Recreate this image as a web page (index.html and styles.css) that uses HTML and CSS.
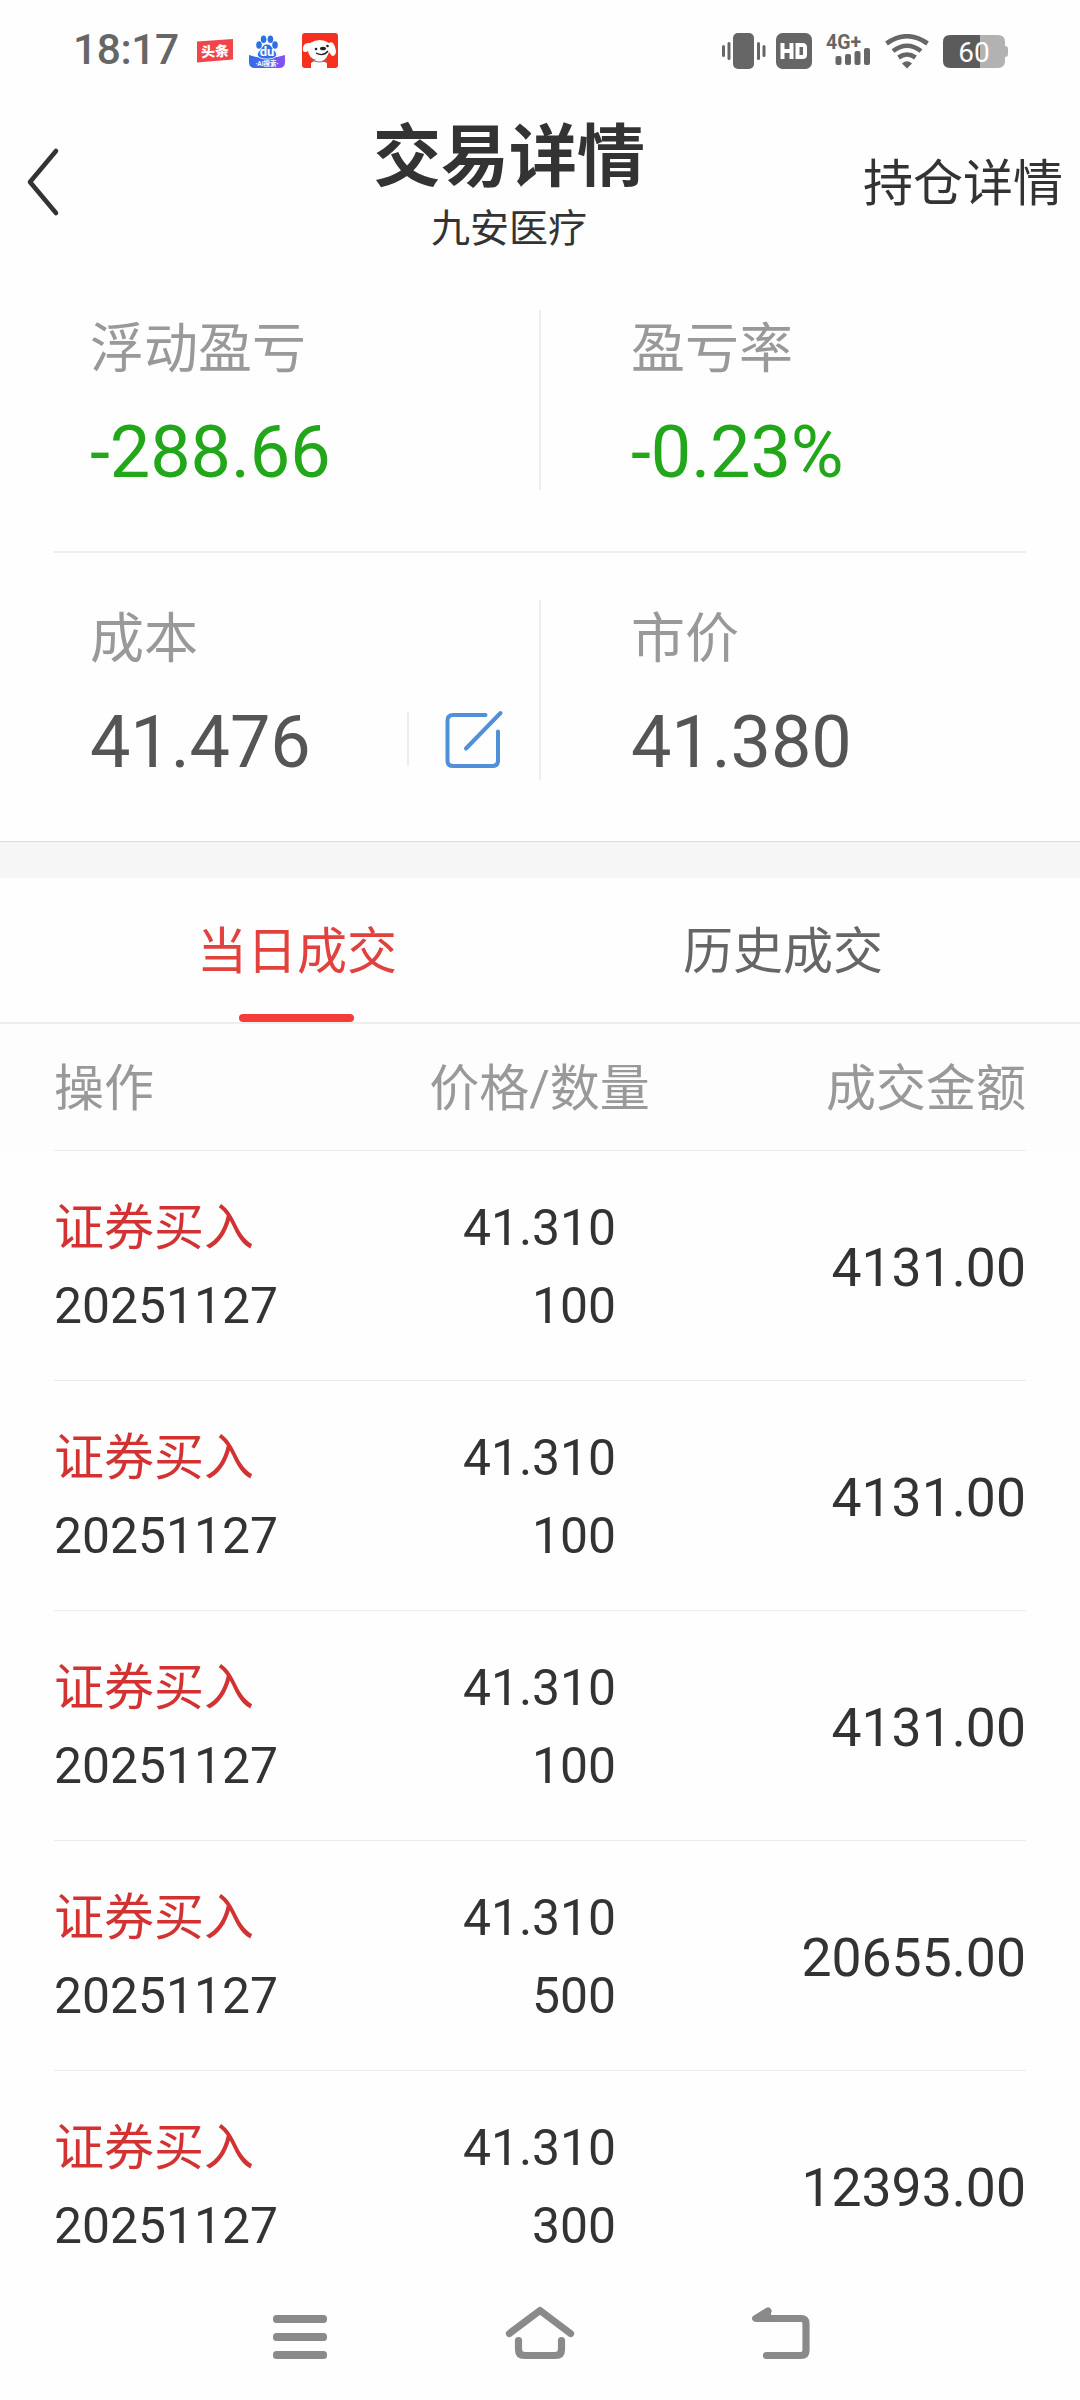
FILE: index.html
```html
<!DOCTYPE html>
<html lang="zh-CN">
<head>
<meta charset="utf-8">
<title>交易详情</title>
<link rel="stylesheet" href="styles.css">
</head>
<body>
<div class="screen">
  <div class="status">
    <span class="clock">18:17</span>
    <svg class="app-toutiao" width="36" height="24" viewBox="0 0 36 24"><path d="M0 2.500 36 0V20.500L0 23.500Z" fill="#f0464b"/><text x="4" y="17.500" class="toutiao-text" transform="rotate(-3 18 12)">头条</text></svg>
    <svg class="app-baidu" width="36" height="34" viewBox="0 0 36 34"><defs><linearGradient id="bd" x1="0" x2="1"><stop offset="0" stop-color="#2f6de8"/><stop offset="1" stop-color="#8552f5"/></linearGradient></defs><path d="M0 20Q18 26 36 20V27Q36 33 30 33H6Q0 33 0 27Z" fill="url(#bd)"/><g fill="#2c6fe6"><ellipse cx="10" cy="10" rx="2.800" ry="3.800"/><ellipse cx="14.600" cy="4.200" rx="2.800" ry="3.800"/><ellipse cx="21.400" cy="4.200" rx="2.800" ry="3.800"/><ellipse cx="26" cy="10" rx="2.800" ry="3.800"/><path d="M18 9C22 9 23 13 26 16C30 21 26 24 18 24C10 24 6 21 10 16C13 13 14 9 18 9Z" stroke="#fff" stroke-width=".8"/></g><text x="18" y="21" class="du-text">du</text><text x="18" y="30.500" class="du-label">·AI搜索·</text></svg>
    <svg class="app-jd" width="36" height="36" viewBox="0 0 36 36"><rect width="36" height="35" rx="3" fill="#f5301e"/><path d="M8 10Q18 4 27 10Q32 7 34 18Q34 23 30 23L27 19Q25 26 20 28L25 30V35H9V30L14 27Q7 25 6 18Q3 20 1 18Q0 9 8 10Z" fill="#fff"/><ellipse cx="21" cy="15.500" rx="3" ry="1.800" fill="#222"/><circle cx="14" cy="16" r="1.300" fill="#222"/><circle cx="25.500" cy="13" r="1.300" fill="#222"/><path d="M14 20Q21 24 26 18" fill="none" stroke="#222" stroke-width="1.300"/><path d="M10 27Q18 31 25 27" fill="none" stroke="#777" stroke-width="1"/></svg>
    <span class="spacer"></span>
    <svg class="ic-vibrate" width="44" height="36" viewBox="0 0 44 36" fill="#666"><rect x="11" width="21" height="36" rx="5"/><rect y="12" width="3" height="12" rx="1.500"/><rect x="5.500" y="9" width="3" height="18" rx="1.500"/><rect x="35" y="9" width="3" height="18" rx="1.500"/><rect x="40.500" y="12" width="3" height="12" rx="1.500"/></svg>
    <svg class="ic-hd" width="36" height="36" viewBox="0 0 36 36"><rect width="36" height="36" rx="6.500" fill="#666"/><path d="M6.500 10V26M15.500 10V26M6.500 18H15.500M21.500 12V24H26.500Q29 24 29 21.500V14.500Q29 12 26.500 12Z" fill="none" stroke="#fff" stroke-width="4"/></svg>
    <svg class="ic-signal" width="46" height="42" viewBox="0 -3 46 42" fill="#666"><text x="0" y="16" class="net-text">4G+</text><rect x="9.500" y="23" width="6" height="9" rx="2"/><rect x="19" y="21" width="6" height="11" rx="2"/><rect x="28.500" y="18" width="6" height="14" rx="2"/><rect x="38" y="15" width="6" height="17" rx="2"/></svg>
    <svg class="ic-wifi" width="44" height="35" viewBox="0 0 44 35" fill="none" stroke="#666" stroke-width="4.600"><path d="M1.500 9.500Q22 -5 42.500 9.500M8 17Q22 6.500 36 17M13.500 23.500Q22 17.500 30.500 23.500"/><path d="M22 34.500 17 29.500Q22 25 27 29.500Z" fill="#666" stroke="none"/></svg>
    <svg class="ic-battery" width="66" height="33" viewBox="0 0 66 33"><path d="M37 0H55Q62 0 62 7V11Q65 11 65 14V19Q65 22 62 22V26Q62 33 55 33H37Z" fill="#b2b2b2"/><path d="M7 0H37V33H7Q0 33 0 26V7Q0 0 7 0Z" fill="#5b5b5b"/><text x="31" y="26.500" class="bat-text">60</text></svg>
  </div>

  <header class="header">
    <svg class="back" width="36" height="72" viewBox="0 0 36 72"><path d="M31 5 5 36 31 67" fill="none" stroke="#333" stroke-width="4.600" stroke-linecap="round" stroke-linejoin="round"/></svg>
    <div class="titles">
      <h1 class="title">交易详情</h1>
      <div class="subtitle">九安医疗</div>
    </div>
    <div class="link">持仓详情</div>
  </header>

  <section class="summary">
    <div class="pair">
      <div class="cell"><div class="label">浮动盈亏</div><div class="value down">-288.66</div></div>
      <div class="cell"><div class="label">盈亏率</div><div class="value down">-0.23%</div></div>
    </div>
    <div class="pair">
      <div class="cell"><div class="label">成本</div>
        <div class="value-row"><div class="value">41.476</div>
          <div class="edit"><svg width="60" height="60" viewBox="0 0 60 60" fill="none" stroke="#4f90d9" stroke-width="4" stroke-linecap="round"><path d="M41.500 5H9Q3.500 5 3.500 10.500V50.500Q3.500 56 9 56H48.500Q54 56 54 50.500V21.500"/><path d="M22 38.500 56.500 3"/></svg></div>
        </div>
      </div>
      <div class="cell"><div class="label">市价</div><div class="value">41.380</div></div>
    </div>
  </section>
  <div class="band"></div>

  <nav class="tabs">
    <div class="tab active">当日成交</div>
    <div class="tab">历史成交</div>
  </nav>

  <div class="thead"><div class="thead-row"><span>操作</span><span class="mid">价格/数量</span><span class="end">成交金额</span></div></div>
  <div class="list">
    <div class="row"><div><div class="op">证券买入</div><div>20251127</div></div><div class="nums"><div>41.310</div><div>100</div></div><div class="amount">4131.00</div></div>
    <div class="row"><div><div class="op">证券买入</div><div>20251127</div></div><div class="nums"><div>41.310</div><div>100</div></div><div class="amount">4131.00</div></div>
    <div class="row"><div><div class="op">证券买入</div><div>20251127</div></div><div class="nums"><div>41.310</div><div>100</div></div><div class="amount">4131.00</div></div>
    <div class="row"><div><div class="op">证券买入</div><div>20251127</div></div><div class="nums"><div>41.310</div><div>500</div></div><div class="amount">20655.00</div></div>
    <div class="row"><div><div class="op">证券买入</div><div>20251127</div></div><div class="nums"><div>41.310</div><div>300</div></div><div class="amount">12393.00</div></div>
  </div>

  <div class="sysnav">
    <svg width="54" height="54" viewBox="0 0 54 54" fill="#8a8a8a"><rect y="9" width="54" height="8" rx="3.500"/><rect y="27" width="54" height="8" rx="3.500"/><rect y="45" width="54" height="8" rx="3.500"/></svg>
    <svg width="70" height="54" viewBox="0 0 70 54" fill="none" stroke="#8a8a8a" stroke-width="7.200" stroke-linecap="round" stroke-linejoin="round"><path d="M4.500 27.500 35 4.500 65.500 27.500"/><path d="M13.500 34.500V43.500Q13.500 49.500 19.500 49.500H50.500Q56.500 49.500 56.500 43.500V34.500"/></svg>
    <svg width="58" height="54" viewBox="0 0 58 54" fill="none" stroke="#8a8a8a" stroke-width="7.200" stroke-linecap="round" stroke-linejoin="round"><path d="M16 5 3.700 12.500H49Q54 12.500 54 17.500V44.500Q54 49.500 49 49.500H14.500"/><path d="M16 5V12" stroke-width="6"/></svg>
  </div>
</div>
</body>
</html>
```
FILE: styles.css
```css
* { box-sizing: border-box; }
body {
  margin: 0;
  background: #fefefe;
  color: #333;
  font-family: Roboto, "Noto Sans CJK SC", sans-serif;
}
svg { display: block; flex: none; }
.screen {
  width: 1080px;
  height: 2400px;
  overflow: hidden;
  display: flex;
  flex-direction: column;
}

/* Status bar */
.status {
  height: 102px;
  padding: 0 71px 0 73px;
  display: flex;
  align-items: center;
}
.clock {
  width: 124px;
  margin-bottom: 2px;
  font-size: 42.500px;
  line-height: 50px;
  font-weight: 500;
  letter-spacing: -0.4px;
  color: #666;
}
.app-baidu { margin-left: 16px; margin-top: 2px; }
.app-jd { margin-left: 17px; }
.spacer { flex: 1; }
.ic-hd { margin-left: 10px; }
.ic-signal { margin-left: 14px; }
.ic-wifi { margin-left: 13px; }
.ic-battery { margin-left: 14px; }
.toutiao-text { font-size: 14px; font-weight: 900; fill: #fff; }
.du-text { font-size: 13px; font-weight: 700; fill: #fff; text-anchor: middle; }
.du-label { font-size: 6.500px; font-weight: 700; fill: #fff; text-anchor: middle; }
.net-text { font-size: 19.500px; font-weight: 700; }
.bat-text { font-size: 28px; fill: #fff; text-anchor: middle; }

/* Header */
.header {
  height: 160px;
  padding: 0 17px 0 25px;
  display: grid;
  grid-template-columns: 348px 272px 1fr;
}
.back { margin-top: 44px; }
.titles { text-align: center; }
.title { margin: 12px 0 0; font-size: 68px; line-height: 88px; font-weight: 700; }
.subtitle { font-size: 39px; line-height: 54px; }
.link { text-align: right; margin-top: 49px; font-size: 50px; line-height: 66px; }

/* Position summary */
.summary { height: 579px; }
.pair { height: 289px; padding-top: 48px; display: grid; grid-template-columns: 1fr 1fr; margin: 0 54px; }
.pair + .pair { border-top: 2px solid #eee; height: 290px; padding-top: 47px; }
.cell { height: 180px; padding: 8px 0 0 36px; }
.cell:first-child { border-right: 2px solid #eee; margin-right: -1px; }
.cell:last-child { padding-left: 91px; }
.label { font-size: 54px; line-height: 64px; color: #999; }
.value { margin-top: 35px; font-size: 72px; line-height: 72px; letter-spacing: -0.1px; color: #555; }
.down { color: #22a61a; }
.value-row { display: flex; justify-content: space-between; }
.edit { height: 54px; margin: 40px 35px 0 0; padding-left: 35px; border-left: 2px solid #eee; }
.edit svg { margin-top: -2px; }
.band { height: 37px; background: #f6f6f6; border-top: 1px solid #ddd; }

/* Tabs */
.tabs { height: 146px; padding: 0 54px; border-bottom: 2px solid #eee; display: grid; grid-template-columns: 1fr 1fr; }
.tab { text-align: center; font-size: 50px; line-height: 66px; padding-top: 41px; color: #666; }
.active { color: #e2423e; }
.active::after { content: ""; display: block; width: 115px; height: 8px; margin: 29px auto 0 185px; border-radius: 4px; background: #f23d3a; }

/* Trades */
.thead { background: #fdfdfd; padding: 0 54px; }
.thead-row, .row { display: grid; grid-template-columns: 324px 324px 324px; border-bottom: 1px solid #ebebeb; }
.thead-row { height: 127px; padding-top: 32px; font-size: 50px; line-height: 66px; color: #999; }
.mid { text-align: center; margin-right: 1px; }
.end, .amount { text-align: right; }
.list { height: 1129px; overflow: hidden; padding: 0 54px; }
.row { height: 230px; padding-top: 38px; font-size: 49.800px; line-height: 78px; }
.op { font-size: 50px; color: #d23232; }
.nums { text-align: right; padding-right: 86px; }
.amount { padding-top: 1px; font-size: 53.500px; line-height: 156px; }

/* System navigation */
.sysnav { height: 120px; padding: 26px 270px 0 273px; display: flex; justify-content: space-between; }
```
